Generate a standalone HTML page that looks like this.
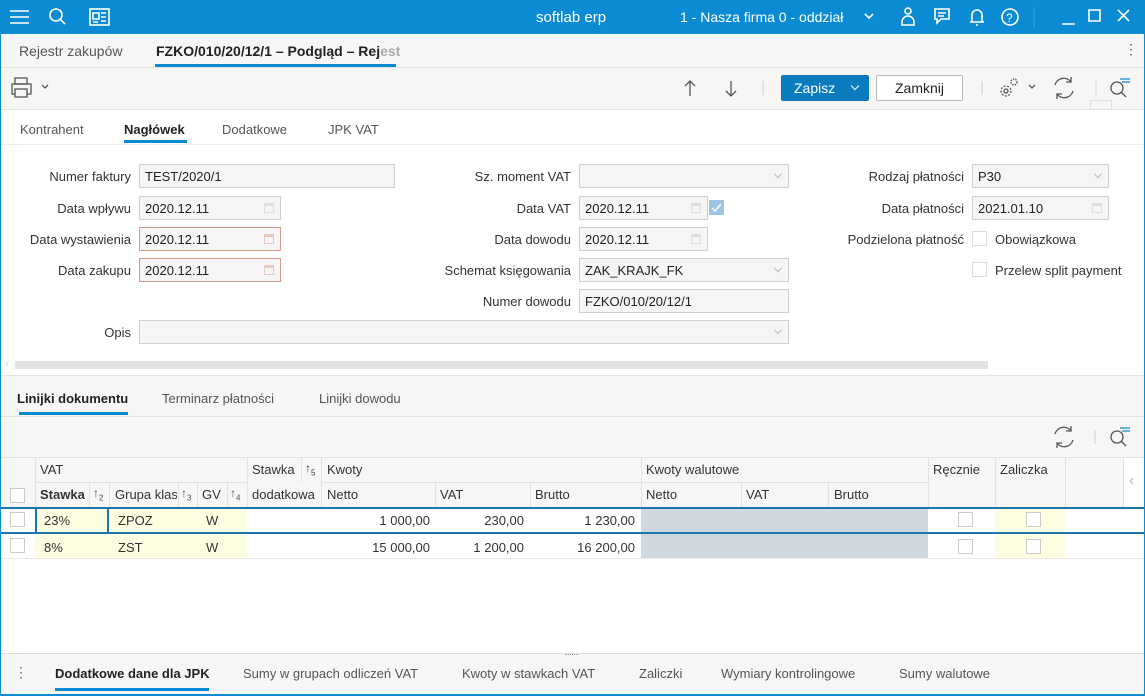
<!DOCTYPE html>
<html><head><meta charset="utf-8"><style>
*{box-sizing:border-box;margin:0;padding:0}
body{width:1145px;height:696px;position:relative;overflow:hidden;font-family:"Liberation Sans",sans-serif;font-size:13px;color:#333;background:#fff}
.a{position:absolute}
.t{position:absolute;white-space:nowrap}
.lbl{position:absolute;white-space:nowrap;text-align:right;color:#333}
.inp{position:absolute;height:24px;background:#f5f5f5;border:1px solid #cfcfcf;padding:4px 0 0 5px;color:#222}
.red{border-color:#d8998a}
.cal{position:absolute;right:6px;top:6px;width:10px;height:10px;border:1px solid #ddd;border-top-width:3px}
.dd{position:absolute;right:7px;top:6px;width:6px;height:6px;border-right:1px solid #bbb;border-bottom:1px solid #bbb;transform:rotate(45deg)}
.cb{position:absolute;width:15px;height:15px;border:1px solid #ccc;background:#fff}
.hd{position:absolute;color:#333;white-space:nowrap}
.vl{position:absolute;width:1px;background:#e2e2e2}
.hl{position:absolute;height:1px;background:#e2e2e2}
</style></head><body>
<div class="a" style="left:0;top:0;width:1145px;height:34px;background:#0a8bd3"></div>
<svg class="a" style="left:0;top:0" width="1145" height="34">
<g stroke="#fff" stroke-width="1.6" fill="none">
<path d="M10 11h19M10 17h19M10 23h19"/>
<circle cx="56" cy="15" r="6"/><path d="M60 19l5 5"/>
<rect x="90" y="9" width="19" height="16"/><path d="M93 13h6v6h-6zM101 13h5M101 17h5M101 21h5M93 22h5"/>
<path d="M865 14l4 4 4-4"/>
<circle cx="908" cy="11" r="3"/><path d="M902 25v-3a6 6 0 0 1 12 0v3z"/>
<path d="M935 9h14v10h-8l-4 4v-4h-2z"/><path d="M938 13h8M938 16h6"/>
<path d="M972 22v-7a5 5 0 0 1 10 0v7zM970 22h14M976 25h2"/>
<circle cx="1010" cy="17" r="8"/>
<path d="M1062 24h13M1089 10h11v11h-11zM1118 10l11 11M1129 10l-11 11"/>
</g>
<text x="1006" y="22" fill="#fff" font-size="12" font-family="Liberation Sans">?</text>
<path d="M1034 7v20" stroke="#3ea4e0" stroke-width="1"/>
</svg>
<div class="t" style="left:536px;top:9px;color:#fff;font-size:15px">softlab erp</div>
<div class="t" style="left:680px;top:9px;color:#fff;font-size:14px">1 - Nasza firma 0 - oddział</div>
<div class="a" style="left:0;top:34px;width:1px;height:662px;background:#0a8bd3"></div>
<div class="a" style="right:0;top:34px;width:1px;height:662px;background:#0a8bd3"></div>
<div class="a" style="left:0;top:694px;width:1145px;height:2px;background:#0a8bd3"></div>
<div class="a" style="left:1px;top:34px;width:1143px;height:76px;background:#f7f6f5"></div>
<div class="hl" style="left:1px;top:67px;width:1143px;background:#e4e4e4"></div>
<div class="t" style="left:19px;top:43px;font-size:14px;color:#555">Rejestr zakupów</div>
<div class="t" style="left:156px;top:43px;font-size:14px;font-weight:bold;color:#222">FZKO/010/20/12/1 – Podgląd – Rej<span style="color:#aaa">est</span></div>
<div class="a" style="left:155px;top:64px;width:241px;height:3px;background:#0a8bd3"></div>
<div class="t" style="left:1124px;top:41px;font-size:14px;color:#555">⋮</div>
<div class="hl" style="left:1px;top:109px;width:1143px;background:#e4e4e4"></div>
<svg class="a" style="left:0;top:67px" width="1145" height="42">
<g stroke="#555" stroke-width="1.3" fill="none">
<rect x="15" y="11" width="12" height="6"/><rect x="12" y="17" width="19" height="10"/><rect x="15" y="22" width="12" height="8" fill="#f7f6f5"/>
<path d="M42 18l3 3 3-3"/>
<path d="M690 29v-15M685 19l5-5 5 5M731 14v15M726 24l5 5 5-5"/>
<path d="M1029 18l3 3 3-3"/>
<path d="M1055 18a9 9 0 0 1 16-3M1073 24a9 9 0 0 1-16 3M1071 10v5h-5M1057 32v-5h5"/>
<circle cx="1117" cy="21" r="6"/><path d="M1121 25l5 5"/>
<circle cx="1006" cy="24" r="5" stroke-dasharray="2 1.5"/><circle cx="1006" cy="24" r="2"/><circle cx="1014" cy="15" r="3" stroke-dasharray="1.5 1"/>
</g>
<path d="M1120 12h10M1122 15h8" stroke="#0a8bd3" stroke-width="1.3"/>
<path d="M763 14v14M982 14v14M1096 14v14" stroke="#ccc"/>
</svg>
<div class="a" style="left:781px;top:75px;width:88px;height:26px;background:#0a7bbd;border-radius:2px"></div>
<div class="t" style="left:794px;top:80px;color:#fff;font-size:14px">Zapisz</div>
<div class="a" style="left:852px;top:83px;width:6px;height:6px;border-right:1.5px solid #fff;border-bottom:1.5px solid #fff;transform:rotate(45deg)"></div>
<div class="a" style="left:876px;top:75px;width:87px;height:26px;background:#fff;border:1px solid #bbb;border-radius:2px"></div>
<div class="t" style="left:895px;top:80px;color:#222;font-size:14px">Zamknij</div>
<div class="a" style="left:1090px;top:100px;width:22px;height:10px;border:1px solid #ddd;background:#f7f6f5"></div>
<div class="t" style="left:20px;top:122px;color:#555">Kontrahent</div>
<div class="t" style="left:124px;top:122px;font-weight:bold;color:#222">Nagłówek</div>
<div class="a" style="left:124px;top:140px;width:63px;height:3px;background:#0a8bd3"></div>
<div class="t" style="left:222px;top:122px;color:#555">Dodatkowe</div>
<div class="t" style="left:328px;top:122px;color:#555">JPK VAT</div>
<div class="hl" style="left:1px;top:144px;width:1143px;background:#eee"></div>
<div class="lbl" style="right:1014px;top:169px">Numer faktury</div>
<div class="inp" style="left:139px;top:164px;width:256px">TEST/2020/1</div>
<div class="lbl" style="right:1014px;top:201px">Data wpływu</div>
<div class="inp" style="left:139px;top:196px;width:142px">2020.12.11<span class="cal"></span></div>
<div class="lbl" style="right:1014px;top:232px">Data wystawienia</div>
<div class="inp red" style="left:139px;top:227px;width:142px">2020.12.11<span class="cal" style="border-color:#e8c8c0"></span></div>
<div class="lbl" style="right:1014px;top:263px">Data zakupu</div>
<div class="inp red" style="left:139px;top:258px;width:142px">2020.12.11<span class="cal" style="border-color:#e8c8c0"></span></div>
<div class="lbl" style="right:1014px;top:325px">Opis</div>
<div class="inp" style="left:139px;top:320px;width:650px"><span class="dd"></span></div>
<div class="lbl" style="right:574px;top:169px">Sz. moment VAT</div>
<div class="inp" style="left:579px;top:164px;width:210px"><span class="dd"></span></div>
<div class="lbl" style="right:574px;top:201px">Data VAT</div>
<div class="inp" style="left:579px;top:196px;width:129px">2020.12.11<span class="cal"></span></div>
<div class="a" style="left:709px;top:200px;width:15px;height:15px;background:#9cc5e3"></div>
<svg class="a" style="left:709px;top:200px" width="15" height="15"><path d="M3 8l3 3 6-7" stroke="#fff" stroke-width="1.5" fill="none"/></svg>
<div class="lbl" style="right:574px;top:232px">Data dowodu</div>
<div class="inp" style="left:579px;top:227px;width:129px">2020.12.11<span class="cal"></span></div>
<div class="lbl" style="right:574px;top:263px">Schemat księgowania</div>
<div class="inp" style="left:579px;top:258px;width:210px">ZAK_KRAJK_FK<span class="dd"></span></div>
<div class="lbl" style="right:574px;top:294px">Numer dowodu</div>
<div class="inp" style="left:579px;top:289px;width:210px">FZKO/010/20/12/1</div>
<div class="lbl" style="right:181px;top:169px">Rodzaj płatności</div>
<div class="inp" style="left:972px;top:164px;width:137px">P30<span class="dd"></span></div>
<div class="lbl" style="right:181px;top:201px">Data płatności</div>
<div class="inp" style="left:972px;top:196px;width:137px">2021.01.10<span class="cal"></span></div>
<div class="lbl" style="right:181px;top:232px">Podzielona płatność</div>
<div class="cb" style="left:972px;top:231px;border-color:#ddd"></div>
<div class="t" style="left:995px;top:232px">Obowiązkowa</div>
<div class="cb" style="left:972px;top:262px;border-color:#ddd"></div>
<div class="t" style="left:995px;top:263px">Przelew split payment</div>
<div class="t" style="left:5px;top:358px;color:#ccc;font-size:11px">‹</div>
<div class="a" style="left:15px;top:361px;width:973px;height:8px;background:#e2e2e2"></div>
<div class="a" style="left:1px;top:375px;width:1143px;height:82px;background:#f7f6f5"></div>
<div class="hl" style="left:1px;top:375px;width:1143px"></div>
<div class="t" style="left:17px;top:391px;font-weight:bold;color:#222">Linijki dokumentu</div>
<div class="a" style="left:19px;top:412px;width:109px;height:3px;background:#0a8bd3"></div>
<div class="t" style="left:162px;top:391px;color:#555">Terminarz płatności</div>
<div class="t" style="left:319px;top:391px;color:#555">Linijki dowodu</div>
<div class="hl" style="left:1px;top:416px;width:1143px"></div>
<svg class="a" style="left:1040px;top:420px" width="100" height="34"><g stroke="#555" stroke-width="1.3" fill="none">
<path d="M15 14a9 9 0 0 1 16-3M33 20a9 9 0 0 1-16 3M31 6v5h-5M17 28v-5h5"/>
<circle cx="77" cy="17" r="6"/><path d="M81 21l5 5"/></g>
<path d="M80 8h10M82 11h8" stroke="#0a8bd3" stroke-width="1.3"/><path d="M55 10v14" stroke="#ccc"/></svg>
<div class="a" style="left:1px;top:457px;width:1122px;height:51px;background:#f7f6f5"></div>
<div class="hl" style="left:1px;top:457px;width:1143px"></div>
<div class="hl" style="left:35px;top:482px;width:212px"></div>
<div class="hl" style="left:321px;top:482px;width:607px"></div>
<div class="vl" style="left:35px;top:457px;height:51px"></div>
<div class="vl" style="left:247px;top:457px;height:51px"></div>
<div class="vl" style="left:321px;top:457px;height:51px"></div>
<div class="vl" style="left:301px;top:457px;height:25px"></div>
<div class="vl" style="left:89px;top:482px;height:26px"></div><div class="vl" style="left:109px;top:482px;height:26px"></div>
<div class="vl" style="left:178px;top:482px;height:26px"></div><div class="vl" style="left:197px;top:482px;height:26px"></div>
<div class="vl" style="left:227px;top:482px;height:26px"></div>
<div class="vl" style="left:435px;top:482px;height:26px"></div><div class="vl" style="left:530px;top:482px;height:26px"></div>
<div class="vl" style="left:641px;top:457px;height:51px"></div>
<div class="vl" style="left:741px;top:482px;height:26px"></div><div class="vl" style="left:828px;top:482px;height:26px"></div>
<div class="vl" style="left:928px;top:457px;height:51px"></div><div class="vl" style="left:995px;top:457px;height:51px"></div>
<div class="vl" style="left:1065px;top:457px;height:51px"></div><div class="vl" style="left:1123px;top:457px;height:51px"></div>
<div class="hd" style="left:40px;top:462px">VAT</div>
<div class="hd" style="left:252px;top:462px">Stawka</div>
<div class="hd" style="left:305px;top:461px;font-size:12px">↑<sub style="font-size:8px">5</sub></div>
<div class="hd" style="left:327px;top:462px">Kwoty</div>
<div class="hd" style="left:646px;top:462px">Kwoty walutowe</div>
<div class="hd" style="left:933px;top:462px">Ręcznie</div>
<div class="hd" style="left:1000px;top:462px">Zaliczka</div>
<div class="cb" style="left:10px;top:488px"></div>
<div class="hd" style="left:40px;top:487px;font-weight:bold">Stawka</div>
<div class="hd" style="left:93px;top:486px;font-size:12px;color:#555">↑<sub style="font-size:8px">2</sub></div>
<div class="hd" style="left:115px;top:487px;width:62px;overflow:hidden">Grupa klas</div>
<div class="hd" style="left:181px;top:486px;font-size:12px;color:#555">↑<sub style="font-size:8px">3</sub></div>
<div class="hd" style="left:202px;top:487px">GV</div>
<div class="hd" style="left:230px;top:486px;font-size:12px;color:#555">↑<sub style="font-size:8px">4</sub></div>
<div class="hd" style="left:252px;top:487px;width:68px;overflow:hidden">dodatkowa</div>
<div class="hd" style="left:327px;top:487px">Netto</div>
<div class="hd" style="left:440px;top:487px">VAT</div>
<div class="hd" style="left:535px;top:487px">Brutto</div>
<div class="hd" style="left:646px;top:487px">Netto</div>
<div class="hd" style="left:746px;top:487px">VAT</div>
<div class="hd" style="left:834px;top:487px">Brutto</div>
<div class="t" style="left:1129px;top:472px;color:#bbb;font-size:16px">‹</div>
<div class="a" style="left:35px;top:509px;width:212px;height:49px;background:#fdfde2"></div>
<div class="a" style="left:641px;top:509px;width:287px;height:49px;background:#d0d8df"></div>
<div class="a" style="left:995px;top:509px;width:70px;height:49px;background:#fdfde2"></div>
<div class="a" style="left:1px;top:507px;width:1143px;height:2px;background:#1c76ae"></div>
<div class="a" style="left:1px;top:532px;width:1143px;height:2px;background:#1c76ae"></div>
<div class="a" style="left:35px;top:509px;width:74px;height:23px;border:2px solid #1c76ae;border-top:0;border-bottom:0;background:#fdfde2"></div>
<div class="hl" style="left:1px;top:558px;width:1143px;background:#e8e8e8"></div>
<div class="cb" style="left:10px;top:512px"></div><div class="cb" style="left:10px;top:538px"></div>
<div class="t" style="left:44px;top:513px">23%</div><div class="t" style="left:118px;top:513px">ZPOZ</div><div class="t" style="left:206px;top:513px">W</div>
<div class="t" style="right:715px;top:513px">1 000,00</div><div class="t" style="right:621px;top:513px">230,00</div><div class="t" style="right:510px;top:513px">1 230,00</div>
<div class="t" style="left:44px;top:540px">8%</div><div class="t" style="left:118px;top:540px">ZST</div><div class="t" style="left:206px;top:540px">W</div>
<div class="t" style="right:715px;top:540px">15 000,00</div><div class="t" style="right:621px;top:540px">1 200,00</div><div class="t" style="right:510px;top:540px">16 200,00</div>
<div class="cb" style="left:958px;top:512px"></div><div class="cb" style="left:1026px;top:512px"></div>
<div class="cb" style="left:958px;top:539px"></div><div class="cb" style="left:1026px;top:539px"></div>
<div class="a" style="left:1px;top:653px;width:1143px;height:41px;background:#f7f6f5;border-top:1px solid #ddd"></div>
<div class="a" style="left:565px;top:654px;width:14px;height:1px;border-top:1px dotted #999"></div>
<div class="t" style="left:14px;top:664px;color:#666;font-size:14px">⋮</div>
<div class="t" style="left:55px;top:666px;font-weight:bold;color:#222">Dodatkowe dane dla JPK</div>
<div class="a" style="left:55px;top:688px;width:154px;height:3px;background:#0a8bd3"></div>
<div class="t" style="left:243px;top:666px;color:#555">Sumy w grupach odliczeń VAT</div>
<div class="t" style="left:462px;top:666px;color:#555">Kwoty w stawkach VAT</div>
<div class="t" style="left:639px;top:666px;color:#555">Zaliczki</div>
<div class="t" style="left:721px;top:666px;color:#555">Wymiary kontrolingowe</div>
<div class="t" style="left:899px;top:666px;color:#555">Sumy walutowe</div>
</body></html>
